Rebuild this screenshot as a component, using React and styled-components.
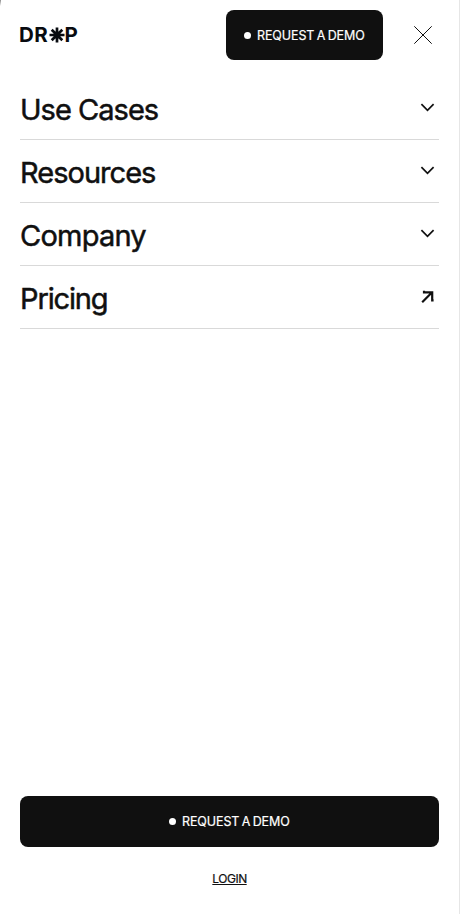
import React from "react";
import styled, { createGlobalStyle } from "styled-components";

const GlobalStyle = createGlobalStyle`
  * { box-sizing: border-box; }
  body {
    margin: 0;
    background: #fff;
    color: #101010;
    font-family: Inter, "Liberation Sans", sans-serif;
  }
`;

const Page = styled.div`
  position: relative;
  display: flex;
  flex-direction: column;
  width: 460px;
  height: 914px;
  padding: 10px 20px 0;
  border-right: 1px solid #e6e6e6;
  background: #fff;
  overflow: hidden;
`;

const CornerEdge = styled.span`
  position: absolute;
  top: 0;
  left: 0;
  width: 1px;
  height: 6px;
  background: linear-gradient(#8c8c8c, #c4c4c4 50%, #fff);
`;

const Header = styled.header`
  display: flex;
  align-items: center;
  height: 50px;
`;

const Logo = styled.a`
  display: flex;
  align-items: center;
  width: 60px;
  height: 20px;
  margin-right: auto;
  color: #080b10;
  font-size: 20.5px;
  font-weight: 700;
  line-height: 20px;
`;

const LogoLetters = styled.span`
  flex: none;
  width: ${({ $width }) => $width}px;
  margin-left: ${({ $shift }) => $shift || 0}px;
  letter-spacing: ${({ $spacing }) => $spacing || 0}px;
  white-space: nowrap;
`;

const LogoStar = styled.svg`
  display: block;
  flex: none;
  width: 16px;
  height: 16px;
`;

const Button = styled.button`
  display: flex;
  align-items: center;
  justify-content: center;
  gap: 6px;
  flex: none;
  width: ${({ $width }) => $width};
  height: ${({ $height }) => $height}px;
  padding: 0;
  border: 0;
  border-radius: 8px;
  background: #101010;
  color: #fff;
  font-family: inherit;
  font-size: 12.5px;
  line-height: 16px;
  letter-spacing: -0.1px;
  word-spacing: -1px;
  white-space: nowrap;
  -webkit-text-stroke: 0.2px #fff;
`;

const Dot = styled.span`
  width: 7px;
  height: 7px;
  border-radius: 50%;
  background: #fff;
`;

const ButtonLabel = styled.span`
  width: 108px;
  padding-top: 1px;
  text-align: left;
`;

const CloseButton = styled.button`
  display: flex;
  margin: 0 7px 0 31px;
  padding: 0;
  border: 0;
  background: none;
  color: #101010;
`;

const Menu = styled.nav`
  display: flex;
  flex-direction: column;
  margin-top: 17px;
`;

const MenuRow = styled.a`
  display: flex;
  align-items: center;
  justify-content: space-between;
  height: 63px;
  padding: 4px 4px 0 0;
  border-bottom: 1px solid #d9d9d9;
`;

const MenuLabel = styled.span`
  font-size: 29px;
  line-height: 36px;
  letter-spacing: ${({ $spacing }) => $spacing}px;
  -webkit-text-stroke: 0.5px #101010;
`;

const RowIcon = styled.svg`
  display: block;
  width: 15px;
  height: 15px;
  margin-top: -6px;
`;

const Footer = styled.footer`
  display: flex;
  flex-direction: column;
  align-items: center;
  gap: 24px;
  margin-top: auto;
  padding-bottom: 27px;
`;

const LoginLink = styled.a`
  font-size: 12px;
  line-height: 16px;
  letter-spacing: -0.5px;
  text-decoration: underline;
  text-underline-offset: 1px;
  -webkit-text-stroke: 0.2px #101010;
`;

const items = [
  { label: "Use Cases", spacing: -0.97 },
  { label: "Resources", spacing: -0.98 },
  { label: "Company", spacing: -0.78 },
  { label: "Pricing", spacing: -1.13, external: true },
];

function Chevron() {
  return (
    <RowIcon viewBox="0 0 15 15" fill="none" stroke="#101010" strokeWidth="1.7">
      <path d="M1.4 4.2 7.5 10.4 13.6 4.2" />
    </RowIcon>
  );
}

function DiagonalArrow() {
  return (
    <RowIcon viewBox="0 0 15 15" fill="none" stroke="#101010" strokeWidth="2.2">
      <path d="M2.2 13.2 11.6 3.8M4 1.8V3.4H12.2V11.4H13.6" />
    </RowIcon>
  );
}

function DemoButton({ width, height }) {
  return (
    <Button $width={width} $height={height}>
      <Dot />
      <ButtonLabel>REQUEST A DEMO</ButtonLabel>
    </Button>
  );
}

export default function App() {
  return (
    <>
      <GlobalStyle />
      <Page>
        <CornerEdge />
        <Header>
          <Logo aria-label="DROP">
            <LogoLetters $width={30} $shift={-1} $spacing={0.4}>DR</LogoLetters>
            <LogoStar viewBox="0 0 16 16" stroke="#080b10" strokeWidth="2.7">
              <path d="M8 .5v15M.5 8h15M2.7 2.7l10.6 10.6M13.3 2.7 2.7 13.3" />
            </LogoStar>
            <LogoLetters $width={14} $shift={-0.4}>P</LogoLetters>
          </Logo>
          <DemoButton width="157px" height={50} />
          <CloseButton aria-label="Close">
            <svg width="18" height="18" viewBox="0 0 18 18" stroke="currentColor" strokeWidth="1">
              <path d="M.3.3l17.4 17.4M17.7.3.3 17.7" />
            </svg>
          </CloseButton>
        </Header>
        <Menu>
          {items.map(({ label, spacing, external }) => (
            <MenuRow key={label}>
              <MenuLabel $spacing={spacing}>{label}</MenuLabel>
              {external ? <DiagonalArrow /> : <Chevron />}
            </MenuRow>
          ))}
        </Menu>
        <Footer>
          <DemoButton width="419px" height={51} />
          <LoginLink>LOGIN</LoginLink>
        </Footer>
      </Page>
    </>
  );
}
